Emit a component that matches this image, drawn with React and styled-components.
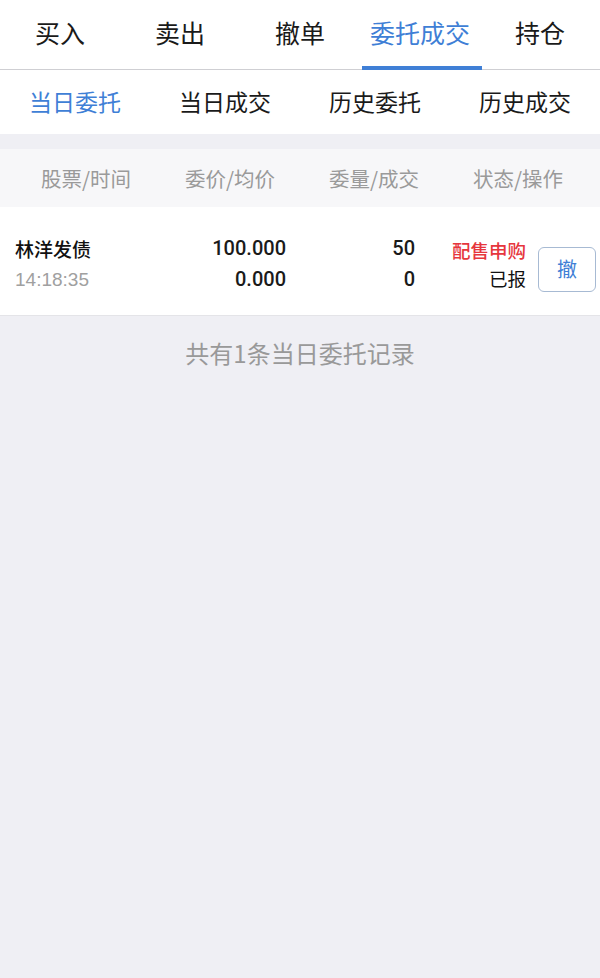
import React, { useState } from 'react';
import styled, { createGlobalStyle } from 'styled-components';

const GlobalStyle = createGlobalStyle`
  html, body {
    margin: 0;
    padding: 0;
    background: #efeff4;
  }
  body {
    font-family: "Liberation Sans", "Noto Sans CJK SC", sans-serif;
    -webkit-font-smoothing: antialiased;
  }
`;

const Page = styled.div`
  width: 600px;
  min-height: 978px;
  background: #efeff4;
`;

const MainTabs = styled.nav`
  display: grid;
  grid-template-columns: repeat(5, 1fr);
  height: 69px;
  background: #fff;
  border-bottom: 1px solid #cfcfd3;
`;

const MainTab = styled.div`
  position: relative;
  display: flex;
  align-items: center;
  justify-content: center;
  padding-bottom: 5px;
  font-family: "Noto Sans CJK SC", sans-serif;
  font-size: 25px;
  color: ${p => (p.$active ? '#3f7fd6' : '#1a1a1a')};

  &::after {
    content: '';
    display: ${p => (p.$active ? 'block' : 'none')};
    position: absolute;
    left: 2px;
    right: -2px;
    bottom: -1px;
    height: 4px;
    background: #3f7fd6;
  }
`;

const SubTabs = styled.nav`
  display: grid;
  grid-template-columns: repeat(4, 1fr);
  height: 64px;
  background: #fff;
`;

const SubTab = styled.div`
  display: flex;
  align-items: center;
  justify-content: center;
  padding-bottom: 3px;
  font-family: "Noto Sans CJK SC", sans-serif;
  font-size: 23px;
  color: ${p => (p.$active ? '#3f7fd6' : '#1a1a1a')};
`;

const TableHead = styled.div`
  display: grid;
  grid-template-columns: repeat(4, 1fr);
  margin-top: 15px;
  height: 58px;
  padding: 0 10px 0 14px;
  background: #f7f7f9;
`;

const HeadCell = styled.div`
  display: flex;
  align-items: center;
  justify-content: center;
  font-family: "Noto Sans CJK SC", sans-serif;
  font-size: 20.5px;
  color: #9a9a9a;
`;

const Row = styled.div`
  display: grid;
  grid-template-columns: 150px 121px 129px 111px 58px;
  align-items: center;
  height: 108px;
  padding-left: 15px;
  background: #fff;
  border-bottom: 1px solid #e4e4e8;
`;

const Cell = styled.div`
  display: flex;
  flex-direction: column;
  align-items: ${p => (p.$align === 'left' ? 'flex-start' : 'flex-end')};
  gap: ${p => p.$gap || 8}px;
  padding-top: 6px;
`;

const Name = styled.span`
  font-family: "Noto Sans CJK SC", sans-serif;
  font-weight: 500;
  font-size: 19px;
  line-height: 23px;
  color: #111;
`;

const Time = styled.span`
  font-family: "Liberation Sans", sans-serif;
  font-size: 19px;
  line-height: 23px;
  color: #a0a0a0;
`;

const Num = styled.span`
  font-family: Roboto, "Liberation Sans", sans-serif;
  font-weight: 500;
  font-size: 20px;
  line-height: 23px;
  color: #1a1a1a;
`;

const Status = styled.span`
  font-family: "Noto Sans CJK SC", sans-serif;
  font-size: 18.5px;
  line-height: 22px;
  font-weight: ${p => (p.$red ? 500 : 400)};
  color: ${p => (p.$red ? '#e6363d' : '#111')};
`;

const CancelButton = styled.button`
  width: 58px;
  height: 45px;
  margin: 17px 0 0 12px;
  padding: 0 0 2px;
  border: 1px solid #a7bad3;
  border-radius: 6px;
  background: #fff;
  font-family: "Noto Sans CJK SC", sans-serif;
  font-size: 20px;
  color: #3f7fd6;
  cursor: pointer;
`;

const Footer = styled.div`
  padding-top: 22px;
  text-align: center;
  font-family: "Noto Sans CJK SC", sans-serif;
  font-size: 24px;
  line-height: 30px;
  color: #999;
`;

const mainTabs = ['买入', '卖出', '撤单', '委托成交', '持仓'];
const subTabs = ['当日委托', '当日成交', '历史委托', '历史成交'];
const heads = ['股票/时间', '委价/均价', '委量/成交', '状态/操作'];

const orders = [
  {
    name: '林洋发债',
    time: '14:18:35',
    price: '100.000',
    avg: '0.000',
    qty: '50',
    deal: '0',
    type: '配售申购',
    status: '已报',
  },
];

export default function App() {
  const [main, setMain] = useState(3);
  const [sub, setSub] = useState(0);

  return (
    <Page>
      <GlobalStyle />
      <MainTabs>
        {mainTabs.map((t, i) => (
          <MainTab key={t} $active={i === main} onClick={() => setMain(i)}>
            {t}
          </MainTab>
        ))}
      </MainTabs>
      <SubTabs>
        {subTabs.map((t, i) => (
          <SubTab key={t} $active={i === sub} onClick={() => setSub(i)}>
            {t}
          </SubTab>
        ))}
      </SubTabs>

      <TableHead>
        {heads.map(h => (
          <HeadCell key={h}>{h}</HeadCell>
        ))}
      </TableHead>

      {orders.map(o => (
        <Row key={o.name + o.time}>
          <Cell $align="left">
            <Name>{o.name}</Name>
            <Time>{o.time}</Time>
          </Cell>
          <Cell>
            <Num>{o.price}</Num>
            <Num>{o.avg}</Num>
          </Cell>
          <Cell>
            <Num>{o.qty}</Num>
            <Num>{o.deal}</Num>
          </Cell>
          <Cell $gap={6}>
            <Status $red>{o.type}</Status>
            <Status>{o.status}</Status>
          </Cell>
          <CancelButton>撤</CancelButton>
        </Row>
      ))}

      <Footer>共有{orders.length}条当日委托记录</Footer>
    </Page>
  );
}
